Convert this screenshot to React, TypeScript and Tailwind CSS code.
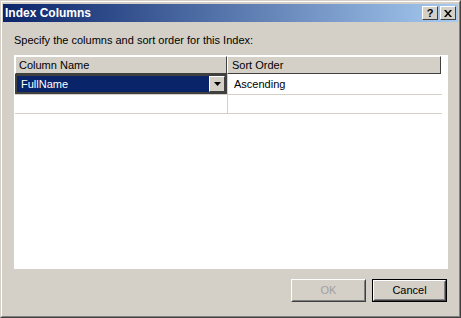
import React from "react";

const font = { fontFamily: '"Liberation Sans", Arial, sans-serif' };

function CaptionButton({ children }: { children: React.ReactNode }) {
  return (
    <div className="w-[16px] h-[14px] bg-[#d4d0c8] border border-t-white border-l-white border-r-[#404040] border-b-[#404040] flex items-center justify-center">
      {children}
    </div>
  );
}

function Button({ label, disabled, def }: { label: string; disabled?: boolean; def?: boolean }) {
  return (
    <div className={def ? "w-[75px] h-[23px] border border-black" : "w-[75px] h-[23px]"}>
      <div className="w-full h-full border border-t-white border-l-white border-r-[#404040] border-b-[#404040]">
        <div className="w-full h-full border border-t-[#d4d0c8] border-l-[#d4d0c8] border-r-[#808080] border-b-[#808080] flex items-center justify-center">
          <span className={disabled ? "text-[11px] text-[#a0a0a0]" : "text-[11px] text-black"} style={font}>
            {label}
          </span>
        </div>
      </div>
    </div>
  );
}

export default function App() {
  return (
    <div className="w-[461px] h-[318px] border border-t-[#d4d0c8] border-l-[#d4d0c8] border-r-[#404040] border-b-[#404040]" style={font}>
      <div className="w-full h-full border border-t-white border-l-white border-r-[#808080] border-b-[#808080] bg-[#d4d0c8] p-px flex flex-col">
        {/* Title bar */}
        <div className="h-[18px] mt-px flex items-center justify-between pl-[2px] pr-[2px] bg-[linear-gradient(to_right,#0a246a,#a6caf0)]">
          <span className="text-white font-bold text-[12px] leading-none">Index Columns</span>
          <div className="flex gap-[2px]">
            <CaptionButton>
              <span className="text-[11px] font-bold leading-none text-black">?</span>
            </CaptionButton>
            <CaptionButton>
              <svg width="8" height="7" viewBox="0 0 8 7">
                <path d="M0 0h2l2 2.5L6 0h2L5 3.5 8 7H6L4 4.5 2 7H0l3-3.5z" fill="black" />
              </svg>
            </CaptionButton>
          </div>
        </div>
        {/* Body */}
        <div className="flex-1 flex flex-col pl-[11px] pr-[10px]">
          <div className="mt-[11px] h-[14px] text-[11px] leading-[14px] text-black">
            Specify the columns and sort order for this Index:
          </div>
          <div className="mt-[8px] h-[214px] bg-white pt-px pl-px flex flex-col">
            {/* Header */}
            <div className="flex h-[18px]">
              <div className="w-[212px] h-full bg-[#d4d0c8] border border-t-white border-l-white border-r-[#404040] border-b-[#404040] text-[11px] leading-[16px] pl-[3px] text-black">
                Column Name
              </div>
              <div className="w-[214px] h-full bg-[#d4d0c8] border border-t-white border-l-white border-r-[#404040] border-b-[#404040] text-[11px] leading-[16px] pl-[4px] text-black">
                Sort Order
              </div>
            </div>
            {/* Row 1 */}
            <div className="flex h-[21px] w-[427px] border-b border-[#d4d0c8]">
              <div className="w-[212px] h-full border-2 border-[#404040] flex">
                <div className="flex-1 bg-[#0a246a] text-white text-[11px] leading-[17px] pl-[4px]">FullName</div>
                <div className="w-[16px] h-full bg-[#d4d0c8] border border-t-white border-l-white border-r-[#404040] border-b-[#404040] flex items-center justify-center">
                  <svg width="7" height="4" viewBox="0 0 7 4">
                    <path d="M0 0h7L3.5 4z" fill="black" />
                  </svg>
                </div>
              </div>
              <div className="w-[215px] h-full border-l border-[#d4d0c8] text-[11px] leading-[20px] pl-[6px] text-black">
                Ascending
              </div>
            </div>
            {/* Row 2 */}
            <div className="flex h-[19px] w-[427px] border-b border-[#d4d0c8]">
              <div className="w-[212px] h-full" />
              <div className="w-[215px] h-full border-l border-[#d4d0c8]" />
            </div>
          </div>
          <div className="mt-[10px] flex justify-end gap-[6px] pr-[1px]">
            <Button label="OK" disabled />
            <Button label="Cancel" def />
          </div>
        </div>
      </div>
    </div>
  );
}
